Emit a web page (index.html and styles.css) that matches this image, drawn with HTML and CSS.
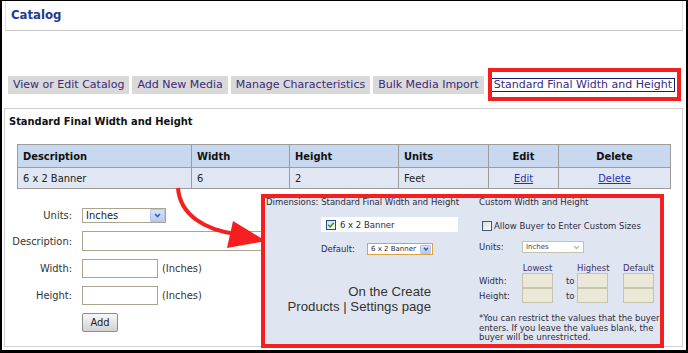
FILE: index.html
```html
<!DOCTYPE html>
<html lang="en">
<head>
    <meta charset="UTF-8">
    <meta name="viewport" content="width=device-width, initial-scale=1.0">
    <title>Catalog - Standard Final Width and Height</title>
    <link rel="stylesheet" href="styles.css">
</head>
<body>
    <div class="frame">
        <header class="page-header">
            <h1>Catalog</h1>
        </header>

        <nav class="tabs">
            <a href="#" class="tab">View or Edit Catalog</a>
            <a href="#" class="tab">Add New Media</a>
            <a href="#" class="tab">Manage Characteristics</a>
            <a href="#" class="tab">Bulk Media Import</a>
            <a href="#" class="tab tab-active">Standard Final Width and Height</a>
        </nav>

        <section class="panel">
            <h2>Standard Final Width and Height</h2>

            <table class="sizes">
                <thead>
                    <tr>
                        <th class="c-desc">Description</th>
                        <th class="c-width">Width</th>
                        <th class="c-height">Height</th>
                        <th class="c-units">Units</th>
                        <th class="c-edit center">Edit</th>
                        <th class="c-delete center">Delete</th>
                    </tr>
                </thead>
                <tbody>
                    <tr>
                        <td>6 x 2 Banner</td>
                        <td>6</td>
                        <td>2</td>
                        <td>Feet</td>
                        <td class="center"><a href="#">Edit</a></td>
                        <td class="center"><a href="#">Delete</a></td>
                    </tr>
                </tbody>
            </table>

            <form class="size-form">
                <label>Units:</label>
                <div class="select select-units">
                    <span>Inches</span>
                    <span class="drop"><svg width="7" height="5" viewBox="0 0 7 5"><path d="M1 1 L3.5 3.6 L6 1" /></svg></span>
                </div>

                <label>Description:</label>
                <input type="text" class="text text-wide">

                <label>Width:</label>
                <div class="with-unit">
                    <input type="text" class="text text-short">
                    <span>(Inches)</span>
                </div>

                <label>Height:</label>
                <div class="with-unit">
                    <input type="text" class="text text-short">
                    <span>(Inches)</span>
                </div>

                <span></span>
                <button type="button" class="add-btn">Add</button>
            </form>
        </section>

        <!-- annotation: highlight around active tab -->
        <div class="tab-callout"></div>

        <!-- annotation: red arrow -->
        <svg class="arrow" width="100" height="70" viewBox="0 0 100 70">
            <path d="M8 3 C 10 30, 35 45, 66 49" fill="none" stroke="#f51f1f" stroke-width="4" />
            <polygon points="63,36 96,56 57,63" fill="#f51f1f" />
        </svg>

        <!-- annotation: inset of the Create Products settings -->
        <div class="inset">
            <div class="inset-col">
                <p class="inset-title">Dimensions: Standard Final Width and Height</p>
                <div class="dim-option">
                    <span class="check">
                        <svg width="8" height="8" viewBox="0 0 8 8"><path d="M1.2 3.8 L3.2 5.8 L6.8 1.8" fill="none" stroke="#21a336" stroke-width="1.6" /></svg>
                    </span>
                    6 x 2 Banner
                </div>
                <div class="dim-default">
                    <span class="dim-label">Default:</span>
                    <div class="select select-small select-orange">
                        <span>6 x 2 Banner</span>
                        <span class="drop"><svg width="6" height="4" viewBox="0 0 6 4"><path d="M1 0.8 L3 3 L5 0.8" /></svg></span>
                    </div>
                </div>
                <p class="dim-caption">On the Create<br>Products | Settings page</p>
            </div>

            <div class="inset-col inset-custom">
                <p class="inset-title">Custom Width and Height</p>
                <div class="allow"><span class="check check-empty"></span>Allow Buyer to Enter Custom Sizes</div>
                <div class="custom-units">
                    <span class="custom-label">Units:</span>
                    <div class="select select-small select-disabled">
                        <span>Inches</span>
                        <span class="drop"><svg width="7" height="5" viewBox="0 0 7 5"><path d="M1 1 L3.5 3.6 L6 1" /></svg></span>
                    </div>
                </div>
                <div class="range">
                    <span></span>
                    <span class="range-head">Lowest</span>
                    <span></span>
                    <span class="range-head">Highest</span>
                    <span></span>
                    <span class="range-head">Default</span>

                    <span class="range-label">Width:</span>
                    <span class="box"></span>
                    <span class="to">to</span>
                    <span class="box"></span>
                    <span></span>
                    <span class="box"></span>

                    <span class="range-label">Height:</span>
                    <span class="box"></span>
                    <span class="to">to</span>
                    <span class="box"></span>
                    <span></span>
                    <span class="box"></span>
                </div>
                <p class="custom-note">*You can restrict the values that the buyer<br>enters. If you leave the values blank, the<br>buyer will be unrestricted.</p>
            </div>
        </div>
    </div>
</body>
</html>
```

FILE: styles.css
```css
:root {
    --callout: #f51f1f;
    --tab-bg: #d9d9d9;
    --tab-text: #3a2a7c;
    --head-bg: #c8d8ee;
    --row-bg: #e0e7f2;
    --grid-line: #9c9c9c;
    --field-border: #a9a58e;
}

* {
    box-sizing: border-box;
    margin: 0;
    padding: 0;
}

body {
    background: #fff;
    color: #222;
    font-family: "DejaVu Sans Condensed", "DejaVu Sans", sans-serif;
    font-size: 11px;
}

.frame {
    position: relative;
    width: 688px;
    height: 353px;
    border-style: solid;
    border-color: #000;
    border-width: 1px 2px 3px 2px;
    background: #fff;
    overflow: hidden;
}

/* page header */
.page-header {
    height: 30px;
    margin: 0 3px;
    padding: 6px 0 0 5px;
    border: 1px solid #e2e2e2;
    border-top: none;
    border-bottom-color: #c8c8c8;
}

.page-header h1 {
    font-size: 13px;
    line-height: 16px;
    color: #1d3a98;
}

/* tabs */
.tabs {
    display: flex;
    align-items: center;
    gap: 3px;
    height: 18px;
    margin: 45px 0 0 6px;
}

.tab {
    display: block;
    height: 18px;
    padding: 0 5px;
    background: var(--tab-bg);
    color: var(--tab-text);
    font-family: "DejaVu Sans", sans-serif;
    font-size: 11px;
    line-height: 18px;
    text-decoration: none;
    white-space: nowrap;
}

.tab-active {
    height: 14px;
    margin-left: 4px;
    padding: 0 2px;
    background: #fff;
    border: 1px solid #1b1b6b;
    line-height: 12px;
}

/* main panel */
.panel {
    height: 239px;
    margin: 14px 3px 0 2px;
    padding-top: 6px;
    border: 1px solid #cfcfcf;
}

.panel h2 {
    padding-left: 4px;
    font-size: 11px;
    line-height: 14px;
    color: #111;
}

.sizes {
    width: 653px;
    margin: 15px 0 0 12px;
    border-collapse: collapse;
    table-layout: fixed;
}

.sizes th,
.sizes td {
    padding: 0 5px;
    border: 1px solid var(--grid-line);
    text-align: left;
    white-space: nowrap;
}

.sizes th {
    height: 23px;
    background: var(--head-bg);
    color: #111;
}

.sizes td {
    height: 21px;
    background: var(--row-bg);
    color: #222;
}

.sizes .center {
    text-align: center;
}

.sizes a {
    color: #2d2db8;
}

.c-desc { width: 174px; }
.c-width { width: 98px; }
.c-height { width: 109px; }
.c-units { width: 90px; }
.c-edit { width: 70px; }
.c-delete { width: 112px; }

/* add form */
.size-form {
    display: grid;
    grid-template-columns: 67px auto;
    column-gap: 10px;
    row-gap: 8px;
    align-items: center;
    justify-items: start;
    margin-top: 19px;
}

.size-form label {
    justify-self: end;
    color: #333;
}

.select {
    display: flex;
    align-items: center;
    justify-content: space-between;
    background: #fff;
    border: 1px solid var(--field-border);
    white-space: nowrap;
}

.select .drop {
    display: flex;
    align-items: center;
    justify-content: center;
    background: linear-gradient(#d6e3fc, #b5caf4);
    border: 1px solid #b3c6ee;
    border-radius: 1px;
}

.select .drop path {
    fill: none;
    stroke: #4a5f8c;
    stroke-width: 1.6;
}

.select-units {
    width: 84px;
    height: 15px;
    padding-left: 3px;
    color: #222;
}

.select-units .drop {
    width: 15px;
    height: 13px;
}

.text {
    background: #fff;
    border: 1px solid var(--field-border);
}

.text-wide {
    width: 200px;
    height: 20px;
}

.text-short {
    width: 76px;
    height: 19px;
}

.with-unit {
    display: flex;
    align-items: center;
    gap: 4px;
    color: #333;
}

.add-btn {
    width: 36px;
    height: 19px;
    background: linear-gradient(#f7f7f7, #d2d2d2);
    border: 1px solid #8c8c8c;
    border-radius: 2px;
    color: #222;
    font-family: "DejaVu Sans Condensed", "DejaVu Sans", sans-serif;
    font-size: 11px;
}

/* annotations */
.tab-callout {
    position: absolute;
    left: 486px;
    top: 67px;
    width: 193px;
    height: 33px;
    border: 4px solid var(--callout);
}

.arrow {
    position: absolute;
    left: 168px;
    top: 184px;
}

.inset {
    position: absolute;
    left: 259px;
    top: 193px;
    width: 403px;
    height: 154px;
    display: grid;
    grid-template-columns: 210px 1fr;
    background: #e0e6f1;
    border: 4px solid var(--callout);
    font-family: "DejaVu Sans", sans-serif;
    font-size: 8.5px;
    color: #2d2d3d;
}

.inset-col {
    padding-left: 1px;
}

.inset-custom {
    padding-left: 4px;
}

.inset-title {
    line-height: 9px;
    white-space: nowrap;
}

.check {
    display: flex;
    align-items: center;
    justify-content: center;
    width: 10px;
    height: 10px;
    background: linear-gradient(135deg, #dcdcd6, #fff);
    border: 1px solid #1c5180;
}

.check-empty {
    border-color: #3b5a82;
}

.dim-option {
    display: flex;
    align-items: center;
    gap: 4px;
    width: 137px;
    height: 15px;
    margin: 10px 0 0 55px;
    padding-left: 5px;
    background: #fff;
}

.dim-default {
    display: flex;
    align-items: center;
    height: 12px;
    margin: 11px 0 0 55px;
}

.dim-label {
    width: 46px;
}

.select-small {
    height: 12px;
    padding-left: 3px;
    font-size: 7px;
}

.select-small .drop {
    width: 11px;
    height: 9px;
    margin-right: 1px;
}

.select-orange {
    width: 66px;
    border-color: #dfa13f;
}

.select-disabled {
    width: 62px;
    border-color: #c4c1ad;
    color: #444;
}

.select-disabled .drop {
    background: none;
    border: none;
}

.select-disabled .drop path {
    stroke: #c2c2c2;
}

.dim-caption {
    width: 165px;
    margin-top: 29px;
    font-family: "Liberation Sans", Arial, sans-serif;
    font-size: 13.2px;
    line-height: 15px;
    text-align: right;
    color: #333;
}

.allow {
    display: flex;
    align-items: center;
    gap: 2px;
    height: 10px;
    margin: 14px 0 0 3px;
    white-space: nowrap;
}

.custom-units {
    display: flex;
    align-items: center;
    height: 12px;
    margin-top: 10px;
}

.custom-label {
    width: 43px;
}

.range {
    display: grid;
    grid-template-columns: 43px 31px 24px 31px 15px 31px;
    grid-template-rows: 10px 15px 15px;
    align-items: center;
    margin-top: 10px;
}

.range-head {
    text-align: center;
    color: #3f3166;
    white-space: nowrap;
}

.range .box {
    height: 15px;
    background: #ebe8d7;
    border: 1px solid #c6c3ae;
}

.range .to {
    padding-left: 13px;
}

.custom-note {
    margin-top: 11px;
    line-height: 9.5px;
    white-space: nowrap;
}
```
